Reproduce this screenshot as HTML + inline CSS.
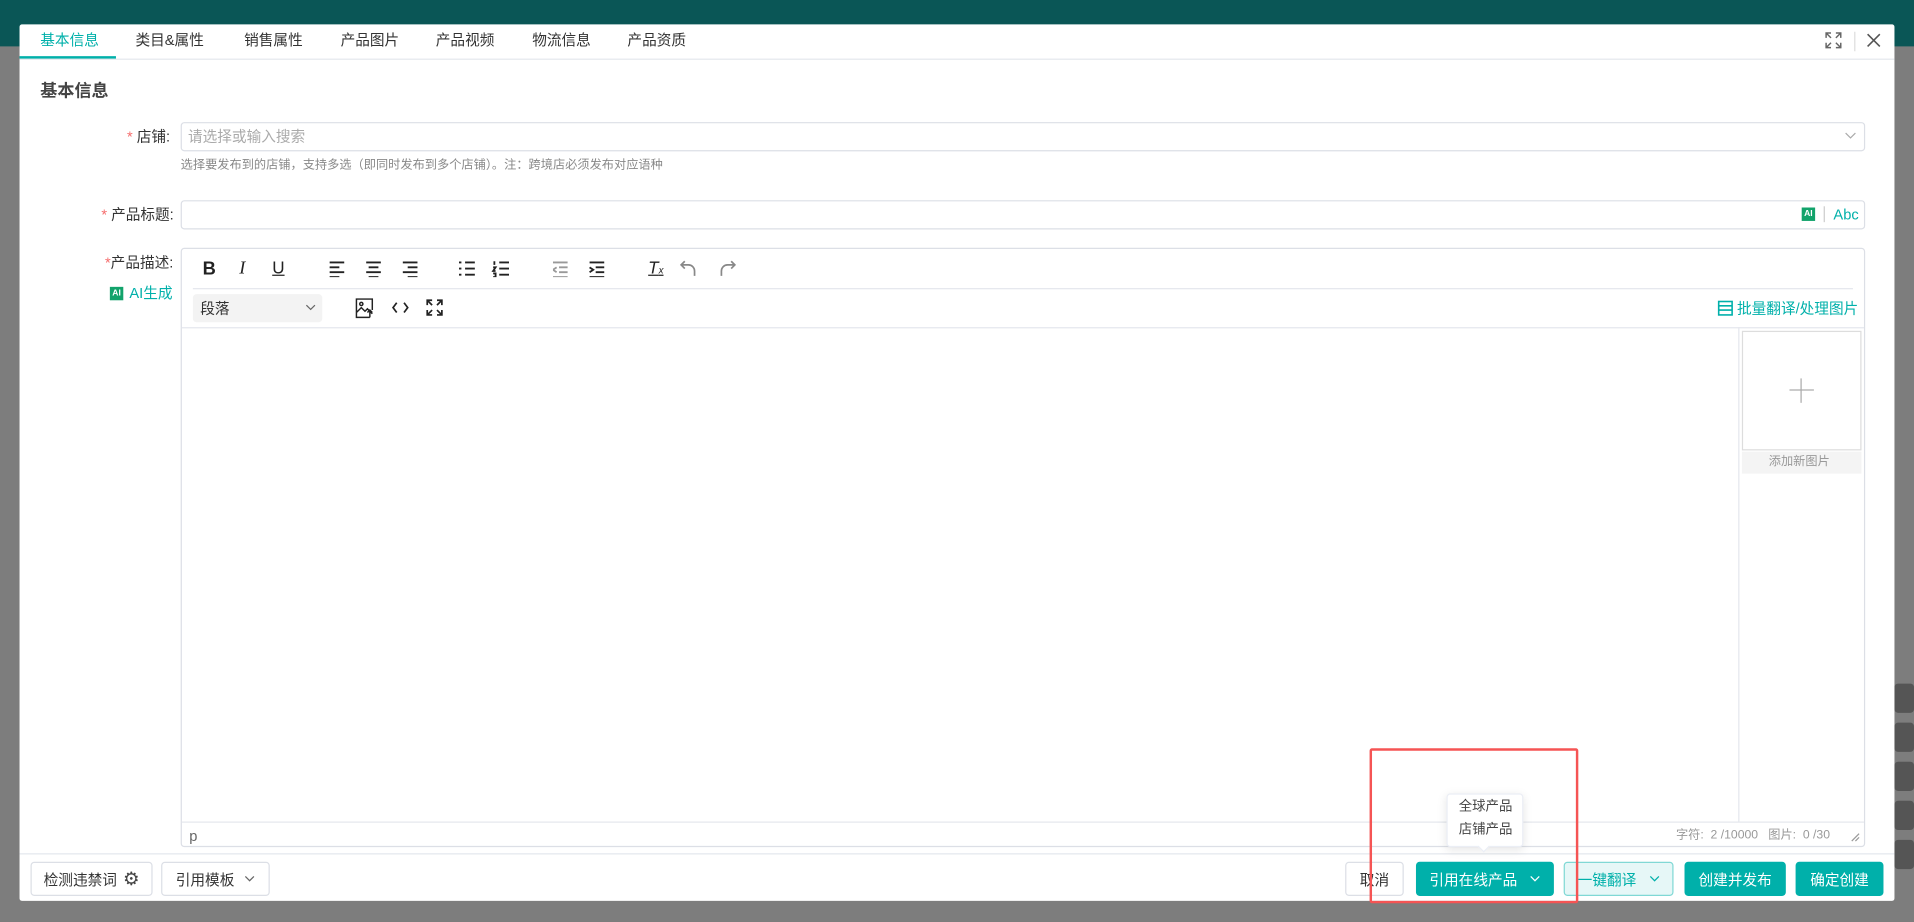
<!DOCTYPE html>
<html><head><meta charset="utf-8">
<style>
*{box-sizing:border-box;margin:0;padding:0}
html,body{width:1914px;height:922px;overflow:hidden;background:#7a7a7a;font-family:"Liberation Sans","Noto Sans CJK SC",sans-serif}
#w{position:absolute;left:0;top:0;width:1568px;height:755px;transform:scale(1.22066);transform-origin:0 0;background:#7d7d7d}
.a{position:absolute}
.t{position:absolute;font-size:12px;color:#333;white-space:nowrap;line-height:1}
.inp{position:absolute;border:1px solid #dcdfe6;border-radius:3px;background:#fff}
.btn{position:absolute;height:28px;border-radius:3px;font-size:12px;display:flex;align-items:center;justify-content:center;white-space:nowrap}
.ic{position:absolute;width:16px;height:16px}
</style></head><body><div id="w">
<div class="a" style="left:0;top:0;width:1568px;height:38px;background:#0a5656"></div>
<div class="a" style="left:1552px;top:560px;width:16px;height:24px;background:#555;border-radius:3px"></div>
<div class="a" style="left:1552px;top:592px;width:16px;height:24px;background:#555;border-radius:3px"></div>
<div class="a" style="left:1552px;top:624px;width:16px;height:24px;background:#555;border-radius:3px"></div>
<div class="a" style="left:1552px;top:656px;width:16px;height:24px;background:#555;border-radius:3px"></div>
<div class="a" style="left:1552px;top:688px;width:16px;height:24px;background:#555;border-radius:3px"></div>

<div class="a" style="left:16px;top:20px;width:1536px;height:718px;background:#fff;border-radius:2px"></div>
<!-- tabs -->
<div class="a" style="left:16px;top:48px;width:1536px;height:1px;background:#e4e7ed"></div>
<div class="a" style="left:16px;top:46px;width:79px;height:2px;background:#00b0aa"></div>
<div class="t" style="left:33px;top:27px;color:#00b0aa">基本信息</div>
<div class="t" style="left:111px;top:27px">类目&amp;属性</div>
<div class="t" style="left:200px;top:27px">销售属性</div>
<div class="t" style="left:279px;top:27px">产品图片</div>
<div class="t" style="left:357px;top:27px">产品视频</div>
<div class="t" style="left:436px;top:27px">物流信息</div>
<div class="t" style="left:514px;top:27px">产品资质</div>
<svg class="a" style="left:1495px;top:26px" width="14" height="14" viewBox="0 0 14 14" fill="none" stroke="#666" stroke-width="1.2"><path d="M1 5V1h4M1 1l4 4M13 5V1H9M13 1L9 5M1 9v4h4M1 13l4-4M13 9v4H9M13 13L9 9"/></svg>
<div class="a" style="left:1519px;top:26px;width:1px;height:16px;background:#ddd"></div>
<svg class="a" style="left:1529px;top:27px" width="12" height="12" viewBox="0 0 12 12" stroke="#555" stroke-width="1.3"><path d="M1 1l10 10M11 1L1 11"/></svg>

<div class="t" style="left:33px;top:67px;font-size:14px;font-weight:bold;color:#444">基本信息</div>

<div class="t" style="left:104px;top:106px"><span style="color:#f56c6c">*</span> 店铺:</div>
<div class="inp" style="left:148px;top:100px;width:1380px;height:24px"></div>
<div class="t" style="left:154px;top:106px;color:#aaa">请选择或输入搜索</div>
<svg class="a" style="left:1511px;top:108px" width="10" height="7" viewBox="0 0 10 7" fill="none" stroke="#aaa"><path d="M1 1l4 4 4-4"/></svg>
<div class="t" style="left:148px;top:131px;font-size:10px;color:#888">选择要发布到的店铺，支持多选（即同时发布到多个店铺）。注：跨境店必须发布对应语种</div>

<div class="t" style="left:83px;top:170px"><span style="color:#f56c6c">*</span> 产品标题:</div>
<div class="inp" style="left:148px;top:164px;width:1380px;height:24px"></div>
<div class="a" style="left:1476px;top:170px;width:11px;height:11px;background:#12a36b;color:#fff;font-size:7px;font-weight:bold;line-height:11px;text-align:center">AI</div>
<div class="a" style="left:1494px;top:169px;width:1px;height:13px;background:#ccc"></div>
<div class="t" style="left:1502px;top:170px;color:#00b0aa">Abc</div>

<div class="t" style="left:86px;top:209px"><span style="color:#f56c6c">*</span>产品描述:</div>
<div class="a" style="left:90px;top:235px;width:11px;height:11px;background:#12a36b;color:#fff;font-size:7px;font-weight:bold;line-height:11px;text-align:center">AI</div>
<div class="t" style="left:106px;top:234px;color:#00b0aa">AI生成</div>

<div class="inp" style="left:148px;top:203px;width:1380px;height:491px"></div>
<div class="t" style="left:166px;top:213px;font-size:15px;font-weight:bold;color:#222">B</div>
<div class="t" style="left:196px;top:213px;font-size:15px;font-style:italic;font-family:'Liberation Serif',serif;color:#222">I</div>
<div class="t" style="left:223px;top:212px;font-size:14px;text-decoration:underline;color:#222">U</div>
<svg class="a" style="left:270px;top:213px" width="104" height="14" fill="none" stroke="#222" stroke-width="1.5"><path d="M0 2h12M0 6h8M0 10h12M0 14h8"/><path d="M30 2h12M32 6h8M30 10h12M32 14h8"/><path d="M60 2h12M64 6h8M60 10h12M64 14h8"/></svg>
<svg class="a" style="left:376px;top:213px" width="44" height="14" fill="none" stroke="#222" stroke-width="1.5"><path d="M0 2h2M5 2h8M0 7h2M5 7h8M0 12h2M5 12h8M33 2h8M33 7h8M33 12h8M29 1v3M28 6h2l-2 3h2M28 11h2v3h-2"/></svg>
<svg class="a" style="left:453px;top:213px" width="44" height="14" fill="none" stroke-width="1.5"><path stroke="#999" d="M0 2h12M5 6h7M5 10h7M0 14h12M3 6l-3 2 3 2"/><path stroke="#222" d="M30 2h12M35 6h7M35 10h7M30 14h12M30 6l3 2-3 2"/></svg>
<div class="t" style="left:531px;top:212px;font-size:14px;font-style:italic;text-decoration:underline;color:#222">T<span style="font-size:8px">x</span></div>
<svg class="a" style="left:557px;top:213px" width="46" height="14" fill="none" stroke="#888" stroke-width="1.4"><path d="M4 1L1 4l3 3M1 4h6a5 5 0 0 1 5 5v4"/><path d="M42 1l3 3-3 3M45 4h-6a5 5 0 0 0-5 5v4"/></svg>
<div class="a" style="left:158px;top:236px;width:1360px;height:1px;background:#e4e7ed"></div>
<div class="a" style="left:158px;top:241px;width:106px;height:23px;background:#f3f3f3;border-radius:3px"></div>
<div class="t" style="left:164px;top:247px">段落</div>
<svg class="a" style="left:250px;top:249px" width="9" height="6" fill="none" stroke="#666"><path d="M1 1l3.5 3.5L8 1"/></svg>
<svg class="a" style="left:291px;top:244px" width="16" height="17" fill="none" stroke="#222" stroke-width="1.2"><path d="M12 16H1V1h13v9M1 12l4-4 3 3 2-2 4 4M12 16v-6M10 12l2-2 2 2"/><circle cx="5" cy="5" r="1.3"/></svg>
<svg class="a" style="left:321px;top:247px" width="14" height="10" fill="none" stroke="#222" stroke-width="1.4"><path d="M4 1L1 5l3 4M10 1l3 4-3 4"/></svg>
<svg class="a" style="left:349px;top:245px" width="14" height="14" fill="none" stroke="#222" stroke-width="1.4"><path d="M1 5V1h4M1 1l4 4M13 5V1H9M13 1L9 5M1 9v4h4M1 13l4-4M13 9v4H9M13 13L9 9"/></svg>
<svg class="a" style="left:1407px;top:246px" width="13" height="13" fill="none" stroke="#00b0aa" stroke-width="1.3"><rect x="1" y="1" width="11" height="11"/><path d="M1 4.5h11M1 8h11"/></svg>
<div class="t" style="left:1423px;top:247px;color:#00b0aa">批量翻译/处理图片</div>
<div class="a" style="left:149px;top:268px;width:1378px;height:1px;background:#e4e7ed"></div>
<div class="a" style="left:1424px;top:268px;width:1px;height:405px;background:#e4e7ed"></div>
<div class="a" style="left:1427px;top:271px;width:98px;height:98px;border:1px solid #ddd;background:#fff"></div>
<div class="a" style="left:1466px;top:319px;width:20px;height:1px;background:#aaa"></div>
<div class="a" style="left:1475px;top:310px;width:1px;height:20px;background:#aaa"></div>
<div class="a" style="left:1427px;top:370px;width:98px;height:18px;background:#f4f4f4"></div>
<div class="t" style="left:1449px;top:374px;font-size:10px;color:#999">添加新图片</div>
<div class="a" style="left:149px;top:673px;width:1378px;height:1px;background:#e4e7ed"></div>
<div class="t" style="left:155px;top:679px;color:#666">p</div>
<div class="t" style="left:1373px;top:680px;font-size:10px;color:#999">字符:&nbsp; 2 /10000&nbsp;&nbsp; 图片:&nbsp; 0 /30</div>
<svg class="a" style="left:1516px;top:682px" width="8" height="8" stroke="#999"><path d="M1 7L7 1M4 7l3-3"/></svg>

<!-- footer -->
<div class="a" style="left:16px;top:699px;width:1536px;height:1px;background:#e4e7ed"></div>
<div class="btn" style="left:25px;top:706px;width:100px;border:1px solid #dcdfe6;color:#333">检测违禁词 <span style="font-size:15px;margin-left:5px;color:#444">⚙</span></div>
<div class="btn" style="left:132px;top:706px;width:89px;border:1px solid #dcdfe6;color:#333">引用模板<svg style="margin-left:8px" width="9" height="6" fill="none" stroke="#666"><path d="M1 1l3.5 3.5L8 1"/></svg></div>
<div class="btn" style="left:1102px;top:706px;width:48px;border:1px solid #dcdfe6;color:#333">取消</div>
<div class="btn" style="left:1160px;top:706px;width:113px;background:#00b0aa;color:#fff">引用在线产品<svg style="margin-left:10px" width="9" height="6" fill="none" stroke="#fff"><path d="M1 1l3.5 3.5L8 1"/></svg></div>
<div class="btn" style="left:1281px;top:706px;width:90px;background:#e6f7f7;border:1px solid #80d8d5;color:#00b0aa">一键翻译<svg style="margin-left:10px" width="9" height="6" fill="none" stroke="#00b0aa"><path d="M1 1l3.5 3.5L8 1"/></svg></div>
<div class="btn" style="left:1380px;top:706px;width:83px;background:#00b0aa;color:#fff">创建并发布</div>
<div class="btn" style="left:1471px;top:706px;width:72px;background:#00b0aa;color:#fff">确定创建</div>

<!-- popover -->
<div class="a" style="left:1185px;top:650px;width:63px;height:44px;background:#fff;border:1px solid #ebeef5;border-radius:3px;box-shadow:0 2px 8px rgba(0,0,0,.1)"></div>
<div class="a" style="left:1212px;top:690px;width:7px;height:7px;background:#fff;transform:rotate(45deg);border-right:1px solid #ebeef5;border-bottom:1px solid #ebeef5"></div>
<div class="t" style="left:1195px;top:656px;font-size:11px;color:#444">全球产品</div>
<div class="t" style="left:1195px;top:675px;font-size:11px;color:#444">店铺产品</div>

<div class="a" style="left:1122px;top:613px;width:171px;height:127px;border:2px solid #f55454;border-radius:2px"></div>
</div></body></html>
